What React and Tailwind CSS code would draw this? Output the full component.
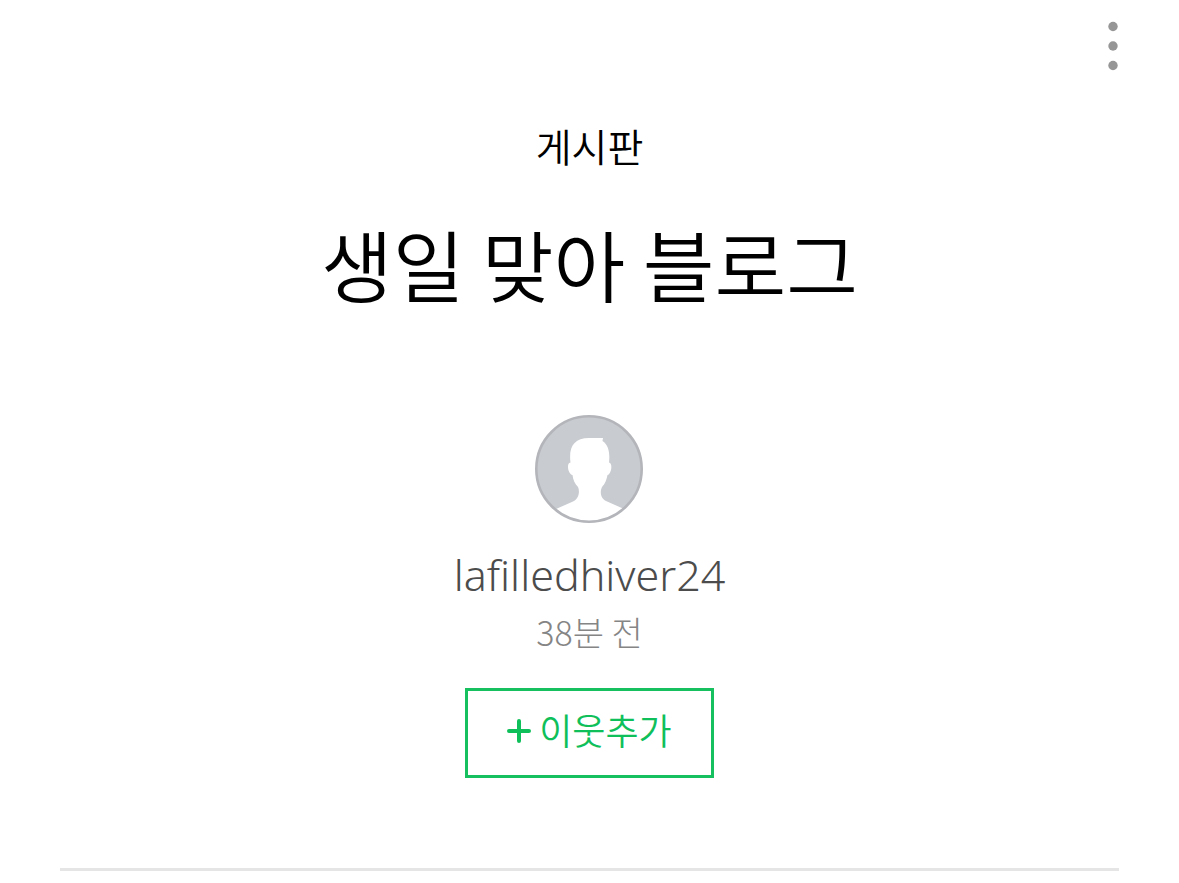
export default function App() {
  return (
    <main className="bg-white px-[60px] font-['Noto_Sans_CJK_KR',sans-serif] text-black">
      <header className="flex h-24 justify-end pt-5">
        <button type="button" aria-label="더보기" className="-mr-3 flex h-13 w-9 justify-center">
          <svg className="h-13 w-3" viewBox="0 0 12 52" fill="#969696" aria-hidden="true">
            <circle cx="6" cy="6.5" r="4.7" />
            <circle cx="6" cy="26" r="4.7" />
            <circle cx="6" cy="45.5" r="4.7" />
          </svg>
        </button>
      </header>
      <article className="flex flex-col items-center border-b-3 border-[#e5e5e5] pb-[90px]">
        <a href="#board" className="mt-[21px] text-[39px] leading-[56px] font-[350]">게시판</a>
        <h1 className="mt-[38px] text-[78px] leading-[104px] font-[350]">생일 맞아 블로그</h1>
        <a href="#profile" className="mt-[100px] flex flex-col items-center">
          <svg className="size-[108px]" viewBox="0 0 108 108" aria-hidden="true">
            <circle cx="54" cy="54" r="52.5" fill="#c8cbd0" />
            <path fill="#fff" d="M21 94L38 86.500C44 84 45 76 43 72C40 69 38 65 37.500 60C33 59 31 48 35.500 47.500C33.500 32 39 23 54 23H68L67.500 26C74 30 75 39 74 47.500C78 48 76.500 59 72.500 60C71.500 65 70 69 67 72C65 76 65 83 71 86L89 94C72 110 38 110 21 94Z" />
            <circle cx="54" cy="54" r="52.700" fill="none" stroke="#b3b5ba" strokeWidth="2.600" />
          </svg>
          <span className="mt-[22px] font-['Noto_Sans',sans-serif] text-[43px] leading-[60px] font-[350] text-[#4c4c4c]">lafilledhiver24</span>
        </a>
        <time className="mt-[2px] text-[34px] leading-[50px] font-light text-[#858585]">38분 전</time>
        <button type="button" className="mt-[31px] flex h-[90px] w-[249px] items-center justify-center gap-2 border-3 border-[#17c05f] pb-2 text-[36px] font-[350] text-[#0fc05a]">
          <svg className="h-7 w-6" viewBox="0 0 24 28" fill="none" stroke="currentColor" strokeWidth="4" strokeLinecap="round" aria-hidden="true"><path d="M12 6V26M2 16H22" /></svg>
          이웃추가
        </button>
      </article>
    </main>
  );
}
